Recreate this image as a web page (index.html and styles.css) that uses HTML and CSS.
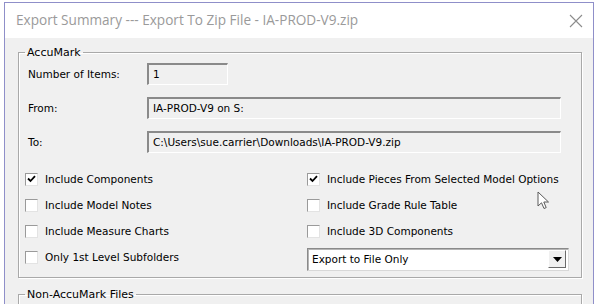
FILE: index.html
```html
<!DOCTYPE html>
<html lang="en">
<head>
    <meta charset="UTF-8">
    <title>Export Summary</title>
    <link rel="stylesheet" href="styles.css">
</head>
<body>
    <div class="window">
        <div class="titlebar">
            <span class="title">Export Summary --- Export To Zip File - IA-PROD-V9.zip</span>
            <svg class="close" width="14" height="14" viewBox="0 0 14 14">
                <path d="M1 1 L13 13 M13 1 L1 13" stroke="#8c8c8c" stroke-width="1.1" fill="none"/>
            </svg>
        </div>
        <div class="content">
            <fieldset class="group">
                <legend>AccuMark</legend>
                <div class="fields">
                    <label>Number of Items:</label>
                    <div class="field short">1</div>
                    <label>From:</label>
                    <div class="field">IA-PROD-V9 on S:</div>
                    <label>To:</label>
                    <div class="field">C:\Users\sue.carrier\Downloads\IA-PROD-V9.zip</div>
                </div>
                <div class="options">
                    <div class="check"><span class="box checked"><svg width="9" height="8" viewBox="0 0 9 8"><path d="M1 3.5 L3.5 6 L8 1.2" stroke="#000" stroke-width="1.8" fill="none"/></svg></span>Include Components</div>
                    <div class="check"><span class="box checked"><svg width="9" height="8" viewBox="0 0 9 8"><path d="M1 3.5 L3.5 6 L8 1.2" stroke="#000" stroke-width="1.8" fill="none"/></svg></span>Include Pieces From Selected Model Options</div>
                    <div class="check"><span class="box"></span>Include Model Notes</div>
                    <div class="check"><span class="box"></span>Include Grade Rule Table</div>
                    <div class="check"><span class="box"></span>Include Measure Charts</div>
                    <div class="check"><span class="box"></span>Include 3D Components</div>
                    <div class="check"><span class="box"></span>Only 1st Level Subfolders</div>
                    <div class="combo">
                        <span>Export to File Only</span>
                        <span class="drop"><svg width="9" height="5" viewBox="0 0 9 5"><path d="M0 0 H9 L4.5 5 Z" fill="#000"/></svg></span>
                    </div>
                </div>
            </fieldset>
            <fieldset class="group second">
                <legend>Non-AccuMark Files</legend>
            </fieldset>
        </div>
    </div>
    <svg class="cursor" width="14" height="20" viewBox="0 0 14 20">
        <path d="M1 1 V15 L4.5 11.8 L7 17.5 L9.2 16.6 L6.8 11 H11.5 Z" fill="#fff" stroke="#5a5a5a" stroke-width="1"/>
    </svg>
</body>
</html>
```
FILE: styles.css
```css
* {
    box-sizing: border-box;
}

html, body {
    margin: 0;
    padding: 0;
    height: 100%;
    overflow: hidden;
}

body {
    background-color: #fff;
    position: relative;
    font-family: "DejaVu Sans", Verdana, sans-serif;
    font-size: 10.5px;
    color: #000;
}

.window {
    margin: 2px 4px 0 4px;
    height: 302px;
    overflow: hidden;
    border: 1px solid #8f8fc9;
    border-bottom: none;
    background-color: #f0f0f0;
}

.titlebar {
    height: 35px;
    background-color: #fff;
    display: flex;
    align-items: center;
    justify-content: space-between;
    padding: 0 10px 2px 11px;
}

.title {
    font-family: "Open Sans", "Noto Sans", sans-serif;
    font-size: 13.6px;
    color: #9a9a9a;
}

.close {
    margin-top: 2px;
}

.content {
    padding: 8px 11px 0 13px;
}

.group {
    margin: 0;
    padding: 4px 20px 7px 9px;
    border: 1px solid #a9a9a9;
    box-shadow: inset 1px 1px 0 #fff, 1px 1px 0 #fff;
    min-width: 0;
}

.group legend {
    padding: 0 2px;
    margin-left: -3px;
    font-size: 11px;
}

.fields {
    display: grid;
    grid-template-columns: 119px 1fr;
    row-gap: 12px;
    align-items: center;
}

.field {
    height: 22px;
    line-height: 19px;
    padding-left: 4px;
    border-top: 2px solid #8a8a8a;
    border-left: 2px solid #8a8a8a;
    border-right: 1px solid #fff;
    border-bottom: 1px solid #fff;
    background-color: #f0f0f0;
    white-space: nowrap;
}

.field.short {
    width: 81px;
}

.options {
    display: grid;
    grid-template-columns: 282px 262px;
    grid-auto-rows: 26px;
    align-items: center;
    margin: 13px 0 0 -3px;
}

.check {
    display: flex;
    align-items: center;
    white-space: nowrap;
}

.box {
    width: 13px;
    height: 13px;
    margin-right: 7px;
    background-color: #fff;
    border-top: 1px solid #9a9a9a;
    border-left: 1px solid #9a9a9a;
    border-right: 1px solid #e3e3e3;
    border-bottom: 1px solid #e3e3e3;
    display: flex;
    align-items: center;
    justify-content: center;
}

.combo {
    height: 23px;
    margin-top: 4px;
    display: flex;
    align-items: center;
    justify-content: space-between;
    padding: 0 2px 0 4px;
    background-color: #fff;
    border-top: 1px solid #8a8a8a;
    border-left: 1px solid #8a8a8a;
    border-right: 1px solid #d8d8d8;
    border-bottom: 1px solid #d8d8d8;
    box-shadow: inset 1px 1px 0 #b5b5b5;
}

.drop {
    width: 18px;
    height: 18px;
    background-color: #f0f0f0;
    border-top: 1px solid #fff;
    border-left: 1px solid #fff;
    border-right: 1px solid #6a6a6a;
    border-bottom: 1px solid #6a6a6a;
    display: flex;
    align-items: center;
    justify-content: center;
}

.group.second {
    margin-top: 10px;
    height: 40px;
}

.cursor {
    position: absolute;
    left: 537px;
    top: 191px;
}
```
